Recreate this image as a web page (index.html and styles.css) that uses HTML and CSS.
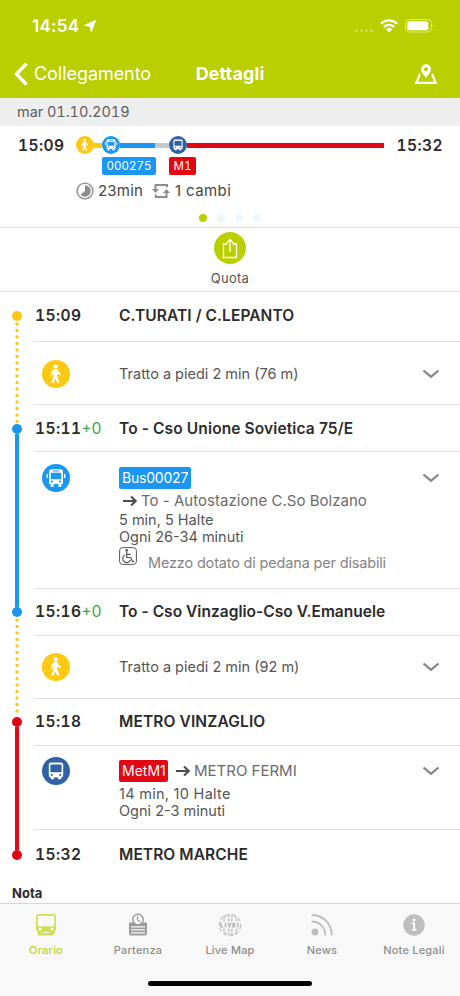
FILE: index.html
```html
<!DOCTYPE html>
<html lang="it">
<head>
<meta charset="utf-8">
<title>Dettagli</title>
<link rel="stylesheet" href="styles.css">
</head>
<body>
<svg class="defs" width="0" height="0">
  <symbol id="walk" viewBox="0 0 28 28">
    <circle cx="13.700" cy="6.400" r="2.100" fill="#fff"/>
    <path d="M12 8.900h3.400l1.400 3 2.400 2-.9 1.300-3-1.800v3.200l2.200 6.200h-2.200l-2-4.600-1.600 4.600H9.200l2.200-6.600v-3.700l-.9 1v3H9v-3.900z" fill="#fff"/>
  </symbol>
  <symbol id="bus" viewBox="0 0 28 28">
    <path fill="#fff" fill-rule="evenodd" d="M9.500 5.200h9q2.500 0 2.500 2.500V20h-1.600v2.700h-3V20h-4.800v2.700h-3V20H7V7.700q0-2.500 2.500-2.500zM11 6.500v1h6v-1zM8.800 8.800v6.500h10.400V8.800zM10 16.600a1 1 0 1 0 .01 0zM18 16.600a1 1 0 1 0 .01 0z"/>
    <path stroke="#fff" stroke-width="1.400" stroke-linecap="round" d="M5.200 10.500v3M22.800 10.500v3"/>
  </symbol>
  <symbol id="metro" viewBox="0 0 28 28">
    <path fill="#fff" fill-rule="evenodd" d="M9 5.500h10q2.200 0 2.200 2.200v10.600q0 2.200-2.200 2.200H9q-2.200 0-2.200-2.200V7.700q0-2.200 2.200-2.200zM9.200 7.600q-.8 0-.8.8v6q0 .8.8.8h9.600q.8 0 .8-.8v-6q0-.8-.8-.8zM9.800 16.900a1 1 0 1 0 .01 0zM18.200 16.900a1 1 0 1 0 .01 0z"/>
    <path fill="#fff" d="M8.500 20h3.500v2.300H9zM16 20h3.500l-.5 2.300h-3z"/>
  </symbol>
  <symbol id="arrow" viewBox="0 0 14 12">
    <path d="M0 6h12.500M8 1.500 12.700 6 8 10.500" fill="none" stroke="#4c4c4c" stroke-width="2.100"/>
  </symbol>
  <symbol id="chevron" viewBox="0 0 18 10">
    <path d="m1.500 1.500 7.500 6.300 7.500-6.300" fill="none" stroke="#858585" stroke-width="2.200"/>
  </symbol>
</svg>

<header class="top">
  <div class="status">
    <span class="clock">14:54</span>
    <svg class="loc" width="12" height="12" viewBox="0 0 12 12"><path d="M12 0 7.200 11.800 6 6.500.2 5.500z" fill="#fff" stroke="#fff" stroke-width=".6"/></svg>
    <span class="signal"><i></i><i></i><i></i><i></i></span>
    <svg class="wifi" width="18" height="14" viewBox="0 0 18 14"><path d="M1 4.700a11.500 11.500 0 0 1 16 0M3.900 8a7.300 7.300 0 0 1 10.200 0" fill="none" stroke="#fff" stroke-width="2.300"/><path d="M9 13.500 5.900 10.400a4.400 4.400 0 0 1 6.200 0z" fill="#fff"/></svg>
    <svg class="battery" width="30" height="14" viewBox="0 0 30 14"><rect x=".5" y=".5" width="26" height="12.500" rx="3.800" fill="none" stroke="#dce782"/><rect x="2.300" y="2.300" width="21" height="9" rx="2" fill="#fff"/><path d="M28.200 5q1.600 1.800 0 3.600z" fill="#dce782"/></svg>
  </div>
  <nav class="nav">
    <a class="back"><svg width="14" height="24" viewBox="0 0 14 24"><path d="M12.500 1.500 2.500 12l10 10.500" fill="none" stroke="#fff" stroke-width="3.400"/></svg><span>Collegamento</span></a>
    <h1>Dettagli</h1>
    <svg class="map" width="22" height="21" viewBox="0 0 22 21"><path d="M5.200 10.500H4.700L1.300 18.900h19.400l-3.400-8.400h-.5" fill="none" stroke="#fff" stroke-width="2.200"/><path fill="#fff" fill-rule="evenodd" d="M11 .2a5 5 0 0 1 5 5C16 9 11.800 11.500 11 14.500 10.200 11.500 6 9 6 5.200a5 5 0 0 1 5-5zm0 3.100a2 2 0 1 0 .01 0z"/></svg>
  </nav>
</header>

<div class="date">mar 01.10.2019</div>

<section class="summary">
  <div class="trip">
    <b class="from">15:09</b>
    <div class="line">
      <svg class="mode yellow" width="18" height="18"><use href="#walk"/></svg>
      <i class="bar yellow b1"></i>
      <svg class="mode blue" width="18" height="18"><use href="#bus"/></svg>
      <i class="bar blue b2"></i>
      <i class="bar grey b3"></i>
      <svg class="mode navy" width="18" height="18"><use href="#metro"/></svg>
      <i class="bar red b4"></i>
    </div>
    <b class="to">15:32</b>
  </div>
  <div class="tags"><span class="tag blue">000275</span><span class="tag red m1">M1</span></div>
  <div class="facts">
    <svg width="18" height="18" viewBox="0 0 18 18"><circle cx="9" cy="9" r="7.900" fill="none" stroke="#8c8c8c" stroke-width="1.400"/><path d="M9 3.300a5.700 5.700 0 1 1-4.400 9.300L9 9z" fill="#8c8c8c"/></svg>
    <span class="dur">23min</span>
    <svg class="swap" width="18" height="16" viewBox="0 0 18 16"><path d="M15 4.200V2H3.500v5M3.800 11.500V14H14.500V9" fill="none" stroke="#8c8c8c" stroke-width="2"/><path d="M0 6h7L3.500 10zM11 10h7l-3.500-4z" fill="#8c8c8c"/></svg>
    <span class="chg">1 cambi</span>
  </div>
  <div class="pages"><i class="on"></i><i></i><i></i><i></i></div>
</section>

<section class="share">
  <span class="share-btn"><svg width="32" height="32" viewBox="0 0 32 32"><path d="M13.500 12H9.500v13.500h13V12h-4M16 20V7.500M12.800 10.700 16 7.500l3.200 3.200" fill="none" stroke="#fff" stroke-width="1.300"/></svg></span>
  <span class="share-text">Quota</span>
</section>

<main class="journey">
  <div class="rail">
    <i class="dot yellow"></i><svg class="walkline" width="4" height="103"><path d="M2 3V103"/></svg>
    <i class="dot blue"></i><i class="seg blue s1"></i>
    <i class="dot blue"></i><svg class="walkline" width="4" height="100"><path d="M2 3V100"/></svg>
    <i class="dot red"></i><i class="seg red s2"></i>
    <i class="dot red"></i>
  </div>
  <div class="rows">
    <div class="row stop r1"><b class="time">15:09</b><b class="name n1">C.TURATI / C.LEPANTO</b></div>
    <div class="row leg w1"><svg class="icon yellow"><use href="#walk"/></svg><p class="foot">Tratto a piedi 2 min (76 m)</p><svg class="chev"><use href="#chevron"/></svg></div>
    <div class="row stop r2"><b class="time">15:11<em>+0</em></b><b class="name n2">To - Cso Unione Sovietica 75/E</b></div>
    <div class="row leg ride busleg"><svg class="icon blue"><use href="#bus"/></svg>
      <div class="detail">
        <span class="line-tag blue">Bus00027</span>
        <div class="dest d1"><svg class="arr"><use href="#arrow"/></svg><span>To - Autostazione C.So Bolzano</span></div>
        <p class="i1">5 min, 5 Halte</p><p class="i2">Ogni 26-34 minuti</p>
        <div class="access"><svg width="18" height="18" viewBox="0 0 18 18"><rect x=".6" y=".6" width="16.800" height="16.800" rx="3" fill="none" stroke="#555" stroke-width="1"/><circle cx="7.700" cy="3.400" r="1.300" fill="#555"/><path d="M7.700 5v5.500h4l2 4.300 1.500-.7M7.700 7.300h4M6 8a4 4 0 1 0 5.500 5" fill="none" stroke="#555" stroke-width="1.200"/></svg><span>Mezzo dotato di pedana per disabili</span></div>
      </div><svg class="chev"><use href="#chevron"/></svg></div>
    <div class="row stop r3"><b class="time">15:16<em>+0</em></b><b class="name n3">To - Cso Vinzaglio-Cso V.Emanuele</b></div>
    <div class="row leg w2"><svg class="icon yellow"><use href="#walk"/></svg><p class="foot">Tratto a piedi 2 min (92 m)</p><svg class="chev"><use href="#chevron"/></svg></div>
    <div class="row stop r4"><b class="time">15:18</b><b class="name n4">METRO VINZAGLIO</b></div>
    <div class="row leg ride metroleg"><svg class="icon navy"><use href="#metro"/></svg>
      <div class="detail">
        <div class="dest d2"><span class="line-tag red metm1">MetM1</span><svg class="arr"><use href="#arrow"/></svg><span>METRO FERMI</span></div>
        <p class="i3">14 min, 10 Halte</p><p class="i4">Ogni 2-3 minuti</p>
      </div><svg class="chev"><use href="#chevron"/></svg></div>
    <div class="row stop last"><b class="time">15:32</b><b class="name n5">METRO MARCHE</b></div>
  </div>
</main>
<h2 class="note">Nota</h2>

<footer class="tabs">
  <a class="tab active"><svg width="22" height="24" viewBox="0 0 22 24"><path fill="#cfdf55" fill-rule="evenodd" d="M4 1h14q3 0 3 3v12q0 3-3 3H4q-3 0-3-3V4q0-3 3-3zM3.500 2.700q-.8 0-.8.8v8.700q0 1 1 1h14.600q1 0 1-1V3.500q0-.8-.8-.8zM5 14.400a1.500 1.500 0 1 0 .01 0zM17 14.400a1.500 1.500 0 1 0 .01 0z"/><path fill="#cfdf55" d="M2.500 18.500H7L8.500 20h5l1.500-1.500h4.500V20q0 2.500-2 2.500h-13q-2 0-2-2.500z"/></svg><span>Orario</span></a>
  <a class="tab"><svg width="22" height="24" viewBox="0 0 22 24"><path fill="#9c9c9c" fill-rule="evenodd" d="M3 9.500h16q1 0 1 1v10q0 2-2 2H4q-2 0-2-2v-10q0-1 1-1zM4 13.300v1.200h14v-1.200zM4 16.300v1.200h14v-1.200zM4 19.300v1.200h14v-1.200z"/><circle cx="11" cy="6.500" r="5.200" fill="#fff" stroke="#9c9c9c" stroke-width="1.500"/><path d="M10.500 3v4l3 2" fill="none" stroke="#9c9c9c" stroke-width="1.300"/></svg><span>Partenza</span></a>
  <a class="tab"><svg width="24" height="24" viewBox="0 0 24 24"><g fill="none" stroke="#c6c6c6"><circle cx="12" cy="12" r="10.700" stroke-width="1.300" stroke-dasharray="4.500 2"/><path stroke-width="1.800" d="M7.500 2.500q-1.400 3-1.600 6M10.700 2v6.500M13.800 2v6.500M17 2.500q1.400 3 1.600 6M7.500 21.500q-1.400-3-1.600-6M10.700 22v-6.500M13.800 22v-6.500M17 21.500q1.400-3 1.600-6" stroke-dasharray="2.600 1"/></g><path d="M3 9.800v4h2M7.500 9.800v4.400M10 9.800l1.500 4 1.500-4M17.500 10.400H15v3.400h2.500M15 12h2.500M20 9.800v4.400" fill="none" stroke="#b8b8b8" stroke-width="1.500"/></svg><span>Live Map</span></a>
  <a class="tab"><svg width="22" height="24" viewBox="0 0 22 24"><circle cx="4" cy="19" r="3.400" fill="#bcbcbc"/><path d="M.8 8.500c8 0 13.500 6 13.500 14M.8 2C12.500 2 20.800 11 20.800 22.500" fill="none" stroke="#bcbcbc" stroke-width="1.800"/></svg><span>News</span></a>
  <a class="tab"><svg width="22" height="24" viewBox="0 0 22 24"><circle cx="11" cy="12" r="10.700" fill="#bebebe"/><circle cx="11" cy="7" r="1.500" fill="#fff"/><path d="M9 10.300h2.200v6.500M8.800 17h4.600" fill="none" stroke="#fff" stroke-width="1.700"/></svg><span>Note Legali</span></a>
  <i class="home"></i>
</footer>
</body>
</html>
```
FILE: styles.css
```css
* { box-sizing: border-box; margin: 0; padding: 0; }
body { width: 460px; height: 996px; overflow: hidden; background: #fff; color: #2b2b2b; font-family: Inter, "Liberation Sans", sans-serif; font-size: 15px; line-height: 18px; display: flex; flex-direction: column; }
i, em { font-style: normal; display: block; }
svg { display: block; flex: none; }
span, b, p { white-space: nowrap; }
.defs { position: absolute; }
.yellow { background: #fdc913; }
.blue { background: #1c96f3; }
.navy { background: #2f62a5; }
.red { background: #e30613; }
.grey { background: #c5cacc; }

.top { flex: none; height: 98px; background: #bacf00; color: #fff; }
.status { display: flex; align-items: center; height: 50px; padding: 2px 25px 0 32px; }
.clock { font-size: 17px; font-weight: 600; letter-spacing: .3px; width: 47px; }
.loc { margin-left: 5px; }
.signal { display: flex; gap: 2px; margin: 9px 7px 0 auto; }
.signal i { width: 3px; height: 3px; border-radius: 50%; background: #d0de59; }
.battery { margin-left: 7px; }
.nav { display: grid; grid-template-columns: 1fr auto 1fr; align-items: center; height: 48px; padding: 0 23px 0 14px; }
.back { display: flex; align-items: center; gap: 6px; font-size: 18px; letter-spacing: -.05px; }
.nav h1 { font-size: 18px; font-weight: 700; letter-spacing: .1px; margin-left: 9px; }
.map { justify-self: end; }

.date { flex: none; height: 28px; padding: 5px 17px; background: #eee; color: #606060; font-size: 14.500px; letter-spacing: -.05px; font-variant-numeric: tabular-nums; }

.summary { flex: none; height: 102px; border-bottom: 1px solid #dcdfe2; }
.trip { display: flex; align-items: center; height: 24px; margin-top: 7px; padding: 0 17px 0 18px; }
.from, .to { padding-top: 1px; font-size: 15.500px; font-weight: 600; letter-spacing: .45px; font-variant-numeric: tabular-nums; }
.from { width: 58px; }
.to { margin-left: auto; }
.line { display: flex; align-items: center; }
.mode { border-radius: 50%; }
.bar { height: 5px; }
.b1 { width: 8px; } .b2 { width: 35px; } .b3 { width: 14px; } .b4 { width: 197px; }
.tags { display: flex; gap: 13px; padding-left: 102px; }
.tag { width: 54px; height: 18px; border-radius: 2px; color: #fff; font-size: 11.500px; line-height: 18px; letter-spacing: .05px; text-align: center; font-variant-numeric: tabular-nums; }
.m1 { width: 27px; }
.facts { display: flex; align-items: center; height: 20px; margin-top: 6px; padding-left: 76px; color: #454545; }
.dur { width: 46px; margin-left: 4px; letter-spacing: .2px; }
.swap { margin: 0 5px 0 8px; }
.chg { letter-spacing: .4px; }
.pages { display: flex; justify-content: center; gap: 10px; margin-top: 13px; }
.pages i { width: 8px; height: 8px; border-radius: 50%; background: #edf6fc; }
.pages .on { background: #bacf00; }

.share { flex: none; height: 64px; padding-top: 4px; border-bottom: 1px solid #dcdfe2; display: flex; flex-direction: column; align-items: center; }
.share-btn { width: 32px; height: 32px; border-radius: 50%; background: #bacf00; }
.share-text { margin-top: 5px; font-size: 13px; letter-spacing: .25px; color: #555; }

.journey { flex: none; height: 587px; padding-top: 1px; display: flex; }
.rail { width: 34px; padding-top: 17.500px; display: flex; flex-direction: column; align-items: center; }
.dot { flex: none; width: 10px; height: 10px; border-radius: 50%; }
.seg { width: 4px; }
.s1 { height: 173px; } .s2 { height: 123px; }
.walkline path { stroke: #fdc913; stroke-width: 3.400px; stroke-dasharray: 0 6.500px; stroke-linecap: round; }
.rows { flex: 1; }
.row { display: flex; border-bottom: 1px solid #dcdfe2; }
.stop { align-items: center; }
.r1 { height: 49px; padding-bottom: 3px; } .r2 { height: 47px; padding-top: 1px; } .r3 { height: 47px; } .r4 { height: 47px; }
.last { height: 49px; border: 0; }
.time { width: 85px; padding-left: 1px; font-size: 15.500px; font-weight: 600; letter-spacing: .45px; display: flex; font-variant-numeric: tabular-nums; }
.time em { color: #43a047; font-weight: 400; letter-spacing: 0; }
.name { font-size: 15.500px; font-weight: 600; }
.n1 { letter-spacing: .08px; }
.n2 { letter-spacing: .12px; }
.n3 { letter-spacing: .03px; }
.n4 { letter-spacing: .12px; }
.n5 { letter-spacing: .08px; }
.icon { width: 28px; height: 28px; border-radius: 50%; margin: 0 49px 0 8px; }
.chev { width: 18px; height: 10px; margin: 0 20px 0 auto; }
.leg { color: #555; }
.w1, .w2 { height: 63px; align-items: center; }
.w1 { padding-top: 1px; }
.foot { font-size: 14.500px; letter-spacing: 0; }
.ride { padding-top: 12px; }
.ride .chev { margin-top: 9px; }
.busleg { height: 137px; } .metroleg { height: 84px; }
.detail { padding-top: 3px; }
.line-tag { display: block; width: 72px; height: 22px; padding: 0 3px; border-radius: 2px; color: #fff; font-size: 14px; line-height: 22px; letter-spacing: -.2px; }
.metm1 { width: 49px; letter-spacing: 0; }
.dest { display: flex; align-items: center; font-size: 15px; color: #6b6b6b; }
.arr { width: 14px; height: 12px; }
.d1 { height: 18px; gap: 4px; padding-left: 4px; margin-top: 3px; letter-spacing: .03px; }
.metroleg { padding-top: 11px; }
.d2 .arr { margin: 0 4px 0 8px; }
.detail p { font-size: 14.500px; line-height: 17px; }
.i1 { margin-top: 1px; } .i3 { margin-top: 3px; }
.i3 { letter-spacing: .28px; }
.access { display: flex; gap: 11px; margin-top: 2px; color: #858585; font-size: 14.500px; letter-spacing: -.17px; }
.access span { margin-top: 7px; }
.note { flex: none; height: 24px; padding: 5px 12px 0; font-size: 13px; font-weight: 700; line-height: 18px; }

.tabs { flex: none; height: 93px; background: #f8f8f8; border-top: 1px solid #d6d6d6; display: grid; grid-template-columns: repeat(5, 1fr); position: relative; }
.tab { display: flex; flex-direction: column; align-items: center; padding-top: 9px; color: #8e8e8e; font-size: 11px; font-weight: 500; letter-spacing: .2px; }
.tab span { margin-top: 4px; }
.active { color: #bfd32b; }
.home { position: absolute; left: 148px; bottom: 10px; width: 164px; height: 5px; border-radius: 3px; background: #000; }
```
